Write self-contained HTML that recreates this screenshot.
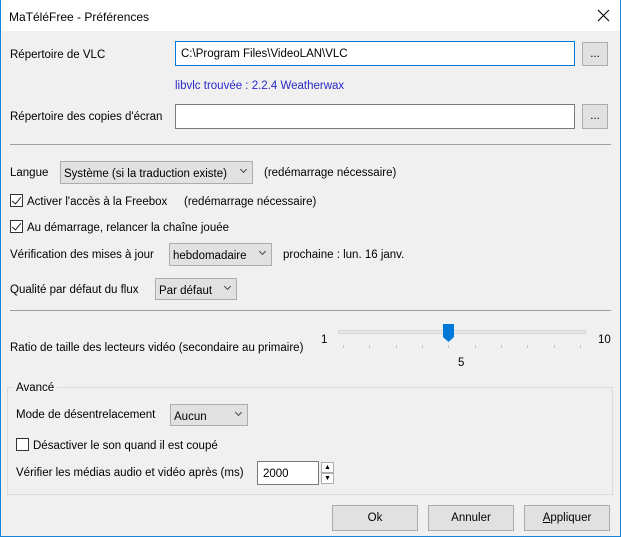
<!DOCTYPE html>
<html><head><meta charset="utf-8"><style>
*{margin:0;padding:0;box-sizing:border-box}
body{width:621px;height:537px;background:#f0f0f0;font-family:"Liberation Sans",sans-serif;font-size:11.5px;color:#000;position:relative;overflow:hidden}
.a{position:absolute;white-space:nowrap;line-height:14px;margin-top:1px}
svg.a{margin-top:0}
.win{position:absolute;left:0;top:0;width:621px;height:537px;border:1px solid #1883d7;border-top:none}
.title{position:absolute;left:0;top:0;width:621px;height:31px;background:#fff;border-left:1px solid #1883d7;border-right:1px solid #1883d7}
.inp{position:absolute;background:#fff;border:1px solid #7a7a7a}
.btn{position:absolute;background:#e1e1e1;border:1px solid #adadad;text-align:center}
.cmb{position:absolute;background:#e1e1e1;border:1px solid #adadad}
.cmb span{position:absolute;left:3px;top:5px;line-height:14px}
.cmb i{position:absolute;right:6px;top:5px;width:5px;height:5px;border-right:1px solid #444;border-bottom:1px solid #444;transform:rotate(45deg)}
.sep{position:absolute;height:1px;background:#a0a0a0}
.cb{position:absolute;width:13px;height:13px;border:1px solid #333;background:#fff}
.cb.on::after{content:"";position:absolute;left:3px;top:0px;width:4px;height:8px;border-right:1.3px solid #222;border-bottom:1.3px solid #222;transform:rotate(40deg)}
.tick{position:absolute;top:345px;width:1px;height:3px;background:#c4c4c4}
</style></head><body>
<div class="win"></div>
<div class="title"></div>
<div class="a" style="left:9px;top:9px;font-size:12px">MaTéléFree - Préférences</div>
<svg class="a" style="left:597px;top:9px" width="13" height="13"><path d="M1 1L12 12M12 1L1 12" stroke="#000" stroke-width="1.1"/></svg>

<div class="a" style="left:10px;top:47px">Répertoire de VLC</div>
<div class="inp" style="left:175px;top:41px;width:400px;height:25px;border-color:#0078d7"></div>
<div class="a" style="left:181px;top:46px">C:\Program Files\VideoLAN\VLC</div>
<div class="btn" style="left:582px;top:42px;width:26px;height:24px;line-height:22px">...</div>
<div class="a" style="left:175px;top:78px;color:#2a2ac8">libvlc trouvée : 2.2.4 Weatherwax</div>

<div class="a" style="left:10px;top:109px">Répertoire des copies d'écran</div>
<div class="inp" style="left:175px;top:104px;width:400px;height:25px"></div>
<div class="btn" style="left:582px;top:104px;width:26px;height:25px;line-height:23px">...</div>

<div class="sep" style="left:10px;top:144px;width:601px"></div>

<div class="a" style="left:10px;top:165px">Langue</div>
<div class="cmb" style="left:60px;top:161px;width:193px;height:23px"><span>Système (si la traduction existe)</span><i></i></div>
<div class="a" style="left:264px;top:165px">(redémarrage nécessaire)</div>

<div class="cb on" style="left:10px;top:194px"></div>
<div class="a" style="left:27px;top:194px">Activer l'accès à la Freebox</div>
<div class="a" style="left:184px;top:194px">(redémarrage nécessaire)</div>
<div class="cb on" style="left:10px;top:220px"></div>
<div class="a" style="left:27px;top:220px">Au démarrage, relancer la chaîne jouée</div>

<div class="a" style="left:10px;top:247px">Vérification des mises à jour</div>
<div class="cmb" style="left:169px;top:243px;width:103px;height:23px"><span>hebdomadaire</span><i></i></div>
<div class="a" style="left:283px;top:247px">prochaine : lun. 16 janv.</div>

<div class="a" style="left:10px;top:282px">Qualité par défaut du flux</div>
<div class="cmb" style="left:155px;top:278px;width:82px;height:22px"><span>Par défaut</span><i></i></div>

<div class="sep" style="left:10px;top:310px;width:601px"></div>

<div class="a" style="left:10px;top:340px">Ratio de taille des lecteurs vidéo (secondaire au primaire)</div>
<div class="a" style="left:321px;top:332px">1</div>
<div class="a" style="left:598px;top:332px">10</div>
<div style="position:absolute;left:338px;top:330px;width:248px;height:4px;background:#e7e7e7;border:1px solid #d6d6d6"></div>
<div class="tick" style="left:343px"></div><div class="tick" style="left:369px"></div><div class="tick" style="left:396px"></div><div class="tick" style="left:422px"></div><div class="tick" style="left:448px"></div><div class="tick" style="left:475px"></div><div class="tick" style="left:501px"></div><div class="tick" style="left:527px"></div><div class="tick" style="left:554px"></div><div class="tick" style="left:580px"></div>
<svg class="a" style="left:443px;top:324px" width="12" height="19"><path d="M0 0H11V13L5.5 18L0 13Z" fill="#0078d7"/></svg>
<div class="a" style="left:458px;top:355px">5</div>

<div style="position:absolute;left:7px;top:387px;width:606px;height:108px;border:1px solid #dcdcdc"></div>
<div class="a" style="left:13px;top:380px;background:#f0f0f0;padding:0 3px">Avancé</div>

<div class="a" style="left:16px;top:407px">Mode de désentrelacement</div>
<div class="cmb" style="left:170px;top:404px;width:78px;height:22px"><span>Aucun</span><i></i></div>
<div class="cb" style="left:16px;top:438px"></div>
<div class="a" style="left:33px;top:438px">Désactiver le son quand il est coupé</div>
<div class="a" style="left:16px;top:465px">Vérifier les médias audio et vidéo après (ms)</div>
<div class="inp" style="left:257px;top:461px;width:62px;height:24px"></div>
<div class="a" style="left:263px;top:466px">2000</div>
<div style="position:absolute;left:321px;top:462px;width:13px;height:11px;background:#fff;border:1px solid #adadad;font-size:7px;text-align:center;line-height:9px">▲</div>
<div style="position:absolute;left:321px;top:473px;width:13px;height:11px;background:#fff;border:1px solid #adadad;font-size:7px;text-align:center;line-height:9px">▼</div>

<div class="btn" style="left:332px;top:505px;width:86px;height:26px;line-height:25px">Ok</div>
<div class="btn" style="left:428px;top:505px;width:86px;height:26px;line-height:25px">Annuler</div>
<div class="btn" style="left:524px;top:505px;width:86px;height:26px;line-height:25px"><u>A</u>ppliquer</div>
</body></html>
